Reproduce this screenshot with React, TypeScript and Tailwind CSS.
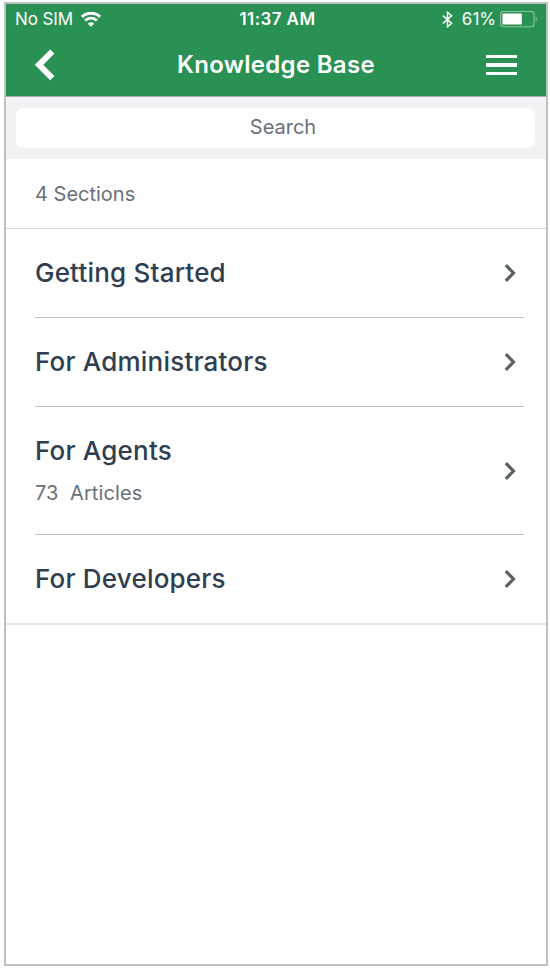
interface Section {
  id: string;
  title: string;
  articles?: number;
}

const SECTIONS: Section[] = [
  { id: "getting-started", title: "Getting Started" },
  { id: "administrators", title: "For Administrators" },
  { id: "agents", title: "For Agents", articles: 73 },
  { id: "developers", title: "For Developers" },
];

const WifiIcon = () => (
  <svg width="20" height="15" viewBox="0 0 20 15" fill="none" stroke="#fff">
    <path d="M0.9 4.9A13 13 0 0 1 19.1 4.9" strokeWidth="3" />
    <path d="M4.1 8.6A8.3 8.3 0 0 1 15.9 8.6" strokeWidth="2.8" />
    <path d="M10 14.8L6.8 11.7A4.4 4.4 0 0 1 13.2 11.7Z" fill="#fff" stroke="none" />
  </svg>
);

const BluetoothIcon = () => (
  <svg width="11" height="17" viewBox="0 0 11 17" fill="none" stroke="#fff" strokeWidth="1.5">
    <path d="M0.9 4.6L9.6 12.2L5.5 15.7V1.3L9.6 4.8L0.9 12.4" />
  </svg>
);

const BatteryIcon = () => (
  <svg width="38" height="17" viewBox="0 0 38 17">
    <rect x="0.6" y="0.5" width="33.4" height="15.2" rx="3" fill="none" stroke="#8bc5a0" strokeWidth="1.1" />
    <rect x="2.5" y="2.6" width="19.3" height="11" rx="0.6" fill="#fff" />
    <path d="M35.7 5.6Q38.4 8.1 35.7 10.6Z" fill="#8bc5a0" />
  </svg>
);

const ChevronIcon = () => (
  <svg width="13" height="20" viewBox="0 0 13 20" fill="none" stroke="#5a6369" strokeWidth="3.2">
    <path d="M1.8 2.1L9.5 10L1.8 17.9" />
  </svg>
);

const StatusBar = () => (
  <div className="grid h-[30px] grid-cols-[1fr_auto_1fr] items-center pl-[9px] pr-[8px] text-white">
    <div className="flex items-center gap-[8px]">
      <span className="pt-px text-[17px] tracking-[-0.1px]">No SIM</span>
      <WifiIcon />
    </div>
    <span className="pl-[2px] pt-px text-[17px] font-semibold tracking-[0.4px]">11:37 AM</span>
    <div className="flex items-center justify-end">
      <BluetoothIcon />
      <span className="ml-[9px] mr-[4px] pt-px text-[17px] tracking-[0px]">61%</span>
      <BatteryIcon />
    </div>
  </div>
);

const NavBar = () => (
  <div className="flex h-[62px] items-center justify-between pl-[29px] pr-[29px]">
    <button type="button" aria-label="Back">
      <svg width="20" height="32" viewBox="0 0 20 32" fill="none" stroke="#fff" strokeWidth="6">
        <path d="M17.3 2.5L4 15.8L17.3 29.1" />
      </svg>
    </button>
    <h1 className="pl-[11px] text-[24px] font-semibold tracking-[0.3px] text-white">Knowledge Base</h1>
    <button type="button" aria-label="Menu" className="flex w-[31px] flex-col gap-[5px]">
      <span className="h-[3.5px] bg-white" />
      <span className="h-[3.5px] bg-white" />
      <span className="h-[3.5px] bg-white" />
    </button>
  </div>
);

const SectionRow = ({ section }: { section: Section }) => (
  <li className="flex h-[89px] items-center justify-between border-b border-[#c0c1c3] pr-[7px] last:h-[88px] last:border-b-0 has-[p]:h-[128px]">
    <div className="has-[p]:pt-[2px]">
      <h2 className="text-[26px] font-medium leading-[32px] tracking-[0.2px] text-[#2f3e50]">
        {section.title}
      </h2>
      {section.articles && (
        <p className="mt-[11px] whitespace-pre text-[20px] leading-[30px] tracking-[0.1px] text-[#68717a]">
          {section.articles}
          {"  Articles"}
        </p>
      )}
    </div>
    <ChevronIcon />
  </li>
);

export default function App() {
  return (
    <div className="h-[970px] w-[550px] bg-white pl-[4px] pt-[2px] font-['Inter','Liberation_Sans',sans-serif]">
      <div className="h-[964px] w-[544px] border-2 border-[#bfbfbf] bg-white">
        <header className="bg-[#289153]">
          <StatusBar />
          <NavBar />
        </header>

        <div className="h-[63px] border-t border-[#a9abb0] bg-[#f2f2f5] px-[10px] pt-[11px]">
          <input
            type="text"
            placeholder="Search"
            className="h-[40px] w-[519px] rounded-[7px] bg-white pb-[2px] pl-[15px] text-center text-[20px] tracking-[0px] placeholder:text-[#68717a]"
          />
        </div>

        <div className="flex h-[70px] items-center border-b border-[#d8d8da] pl-[29px] text-[20px] tracking-[0px] text-[#68717a]">
          4 Sections
        </div>

        <ul className="border-b-2 border-[#e5e5e5] pl-[29px] pr-[22px]">
          {SECTIONS.map((section) => (
            <SectionRow key={section.id} section={section} />
          ))}
        </ul>
      </div>
    </div>
  );
}
